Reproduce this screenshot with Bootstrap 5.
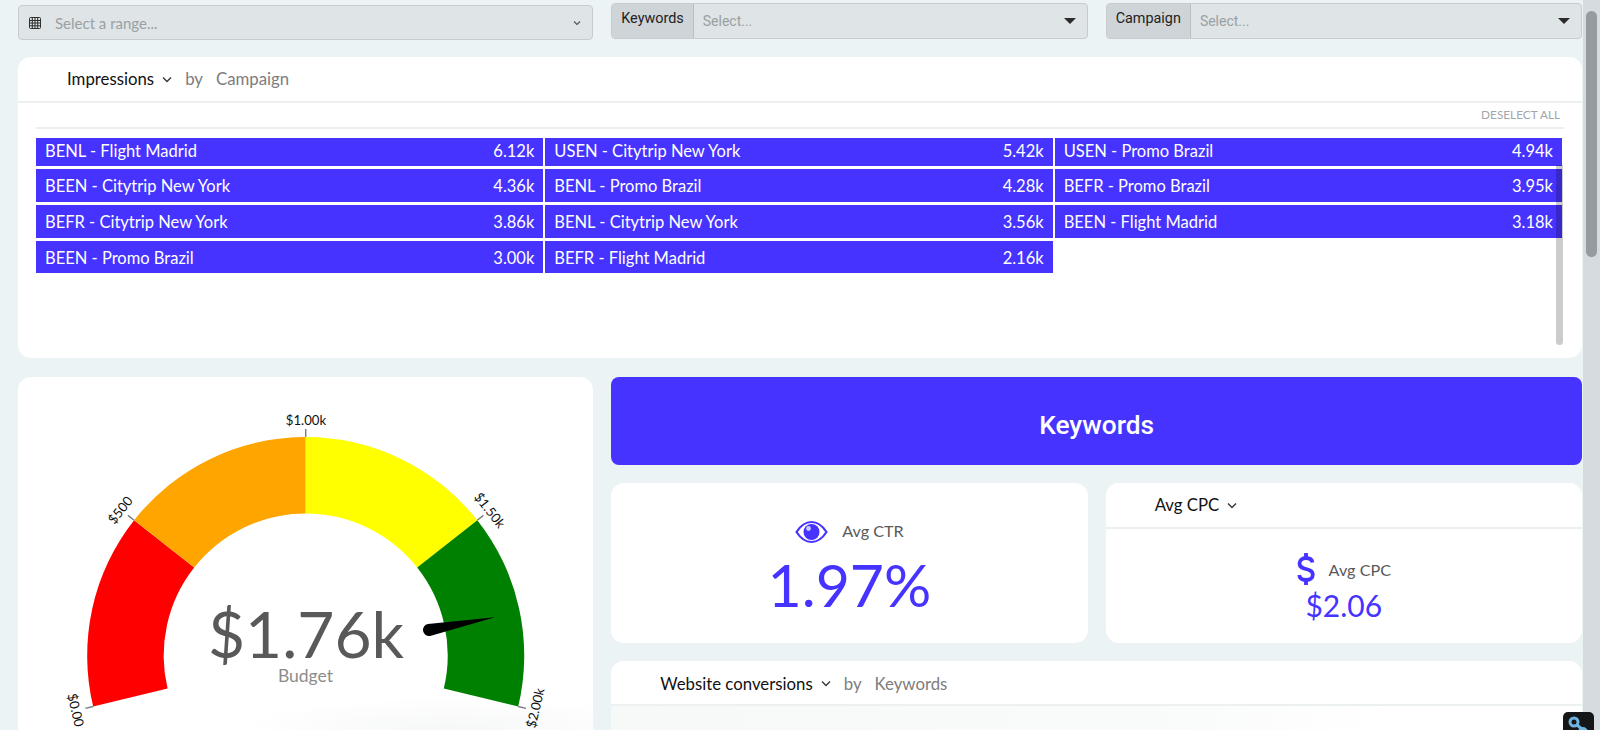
<!doctype html>
<html lang="en">
<head>
<meta charset="utf-8">
<title>Dashboard</title>
<link rel="stylesheet" href="https://cdn.jsdelivr.net/npm/bootstrap@5.3.0/dist/css/bootstrap.min.css">
<style>
:root{--brand:#4633ff;--pagebg:#ecf3f5;--field:#dfe4e6;--fieldline:#c6cccf}
html,body{height:730px;overflow:hidden}
body{background:var(--pagebg);font-family:"Lato","Liberation Sans",sans-serif;color:#111}
.page-area{flex:1 1 auto;min-width:0;height:730px;overflow:hidden;padding:3px 1px 0 18px}
.page-rail{flex:0 0 17px;width:17px;height:730px;background:#d5dbde;padding:11px 3px 0}
.page-thumb{height:246px;border-radius:6px;background:#959b9e}
.dash-row{--bs-gutter-x:18px;--bs-gutter-y:0}
.col-narrow{flex:0 0 37.5%;width:37.5%}
.col-broad{flex:0 0 62.5%;width:62.5%}
.filter-box{height:36px;background:var(--field);border:1px solid var(--fieldline);border-radius:4px;font:14.4px "Roboto",sans-serif}
.filter-range{margin-top:2px;height:35px;padding:0 11px 0 10px}
.ph{color:#9aa0a3}
.filter-tag{background:#ced4d7;color:#222;padding:0 9px;border-right:1px solid #b9bfc2;height:100%;border-radius:3px 0 0 3px;line-height:30px}
.filter-box .ph{margin-left:9px;font-size:14px}
.filter-box.filter-range .ph{margin-left:14px;font-family:"Lato",sans-serif;font-size:15px}
.caret-down{width:0;height:0;border-left:6px solid transparent;border-right:6px solid transparent;border-top:6px solid #2b2b2b;margin:0 11px 0 auto}
.filter-range svg.chev{margin-left:auto}
.panel{border:0;border-radius:13px;background:#fff;overflow:hidden}
.panel-head{display:flex;align-items:center;border-bottom:2px solid #edf0f1;height:46px;padding-left:49px;font-size:16.8px;background:#fff}
.panel-head .metric{color:#111}
.panel-head .by{color:#7d7d7d;margin-left:13px}
.panel-head .dim{color:#7d7d7d;margin-left:13px}
.panel-head svg{margin-left:8px}
.stack{display:flex;flex-direction:column;gap:18px}
.impressions{margin-top:17px;height:301px;position:relative}
.desel{height:26px;margin:0 18px;border-bottom:2px solid #eceeef;text-align:right;font-size:11.8px;color:#a2a6a8;line-height:24px;padding-right:4px}
.tiles{display:grid;grid-template-columns:repeat(3,1fr);grid-template-rows:28px 33px 33px 32px;gap:3px 2px;margin:9px 20px 0 18px;font-size:16.5px;color:#fff}
.tile{background:var(--brand);display:flex;justify-content:space-between;align-items:center;padding:2px 9px 0 9px}
.tile-first{padding:0 9px 1px 9px}
.tile-scroll{position:absolute;right:19px;top:108px;width:7px;height:180px;background:rgba(0,0,0,.2);border-radius:0 0 4px 4px}
.lower{margin-top:19px}
.gauge-panel{height:400px;position:relative}
.gauge-fade{position:absolute;left:220px;right:0;top:320px;height:33px;background:radial-gradient(ellipse 60% 100% at 60% 100%,#f6f7f7,rgba(255,255,255,0))}
.gauge-svg{display:block}
.gauge-svg text{font-family:"Lato",sans-serif}
.banner{height:88px;padding-top:8px;background:var(--brand);color:#fff;border-radius:8px;font:500 26.3px "Roboto",sans-serif}
.kpi{height:160px;border-radius:13px}
.kpi-label{font-size:16.2px;color:#5a5a5a}
.kpi-big{font-size:59px;line-height:1;color:var(--brand);margin-top:10px}
.kpi-mid{font-size:30px;line-height:1;color:var(--brand);margin-top:4px}
.kpi-top{padding-top:36px;gap:14px}
.kpi-top .kpi-label{margin-bottom:2px}
.cpc-head{padding-left:49px}
.cpc-body{padding-top:23px}
.cpc-row{gap:14px}
.cpc-row .kpi-label{padding-top:2px}
.conv{height:100px}
.conv .panel-head{padding-top:3px;height:48px}
.conv-body{height:60px;background:linear-gradient(90deg,#f7f8f8 0,#f9fafa 55%,#fff 80%)}
.corner-chip{position:absolute;left:1563px;top:712px;width:31px;height:30px;background:#141618;border-radius:5px;overflow:hidden}
</style>
</head>
<body class="d-flex position-relative">
<main class="page-area">
  <div class="row dash-row">
    <div class="col-narrow">
      <div class="filter-box filter-range d-flex align-items-center">
        <svg width="12" height="13" viewBox="0 0 12 13" fill="none" stroke="#2e2e2e" stroke-width="1"><rect x=".5" y="1.5" width="11" height="11" rx="1"/><path d="M.5 4.5h11M.5 7h11M.5 9.8h11M3.3 1v12M6 1v12M8.7 1v12"/></svg>
        <span class="ph">Select a range...</span>
        <svg class="chev" width="8" height="6" viewBox="0 0 8 6" fill="none" stroke="#555" stroke-width="1.2"><path d="M1 1.5l3 3 3-3"/></svg>
      </div>
    </div>
    <div class="col-broad">
      <div class="row dash-row">
        <div class="col-6">
          <div class="filter-box d-flex align-items-center">
            <span class="filter-tag">Keywords</span><span class="ph">Select...</span><span class="caret-down"></span>
          </div>
        </div>
        <div class="col-6">
          <div class="filter-box d-flex align-items-center">
            <span class="filter-tag">Campaign</span><span class="ph">Select...</span><span class="caret-down"></span>
          </div>
        </div>
      </div>
    </div>
  </div>

  <section class="card panel impressions">
    <div class="panel-head">
      <span class="metric">Impressions</span>
      <svg width="10" height="7" viewBox="0 0 10 7" fill="none" stroke="#333" stroke-width="1.3"><path d="M1 1.5l4 4 4-4"/></svg>
      <span class="by">by</span><span class="dim">Campaign</span>
    </div>
    <div class="desel">DESELECT ALL</div>
    <div class="tiles">
      <div class="tile tile-first"><span>BENL - Flight Madrid</span><span>6.12k</span></div>
      <div class="tile tile-first"><span>USEN - Citytrip New York</span><span>5.42k</span></div>
      <div class="tile tile-first"><span>USEN - Promo Brazil</span><span>4.94k</span></div>
      <div class="tile"><span>BEEN - Citytrip New York</span><span>4.36k</span></div>
      <div class="tile"><span>BENL - Promo Brazil</span><span>4.28k</span></div>
      <div class="tile"><span>BEFR - Promo Brazil</span><span>3.95k</span></div>
      <div class="tile"><span>BEFR - Citytrip New York</span><span>3.86k</span></div>
      <div class="tile"><span>BENL - Citytrip New York</span><span>3.56k</span></div>
      <div class="tile"><span>BEEN - Flight Madrid</span><span>3.18k</span></div>
      <div class="tile"><span>BEEN - Promo Brazil</span><span>3.00k</span></div>
      <div class="tile"><span>BEFR - Flight Madrid</span><span>2.16k</span></div>
    </div>
    <div class="tile-scroll"></div>
  </section>

  <div class="row dash-row lower">
    <div class="col-narrow">
      <section class="card panel gauge-panel">
        <div class="gauge-fade"></div>
        <svg class="gauge-svg position-relative" width="575" height="353" viewBox="0 0 575 353">
          <path fill="#ff0000" d="M75.2 329.5A218.5 218.5 0 0 1 116.1 143.2L176.2 190.6A142 142 0 0 0 149.6 311.6Z"/>
          <path fill="#ffa500" d="M116.1 143.2A218.5 218.5 0 0 1 287.7 60V136.5A142 142 0 0 0 176.2 190.6Z"/>
          <path fill="#ffff00" d="M287.7 60A218.5 218.5 0 0 1 459.3 143.2L399.2 190.6A142 142 0 0 0 287.7 136.5Z"/>
          <path fill="#008000" d="M459.3 143.2A218.5 218.5 0 0 1 500.2 329.5L425.8 311.6A142 142 0 0 0 399.2 190.6Z"/>
          <g stroke="#7c7c7c" stroke-width="1.4">
            <path d="M75.2 329.5L67.4 331.4M116.1 143.2L110 138.4M287.7 60V52M459.3 143.2L465.4 138.4M500.2 329.5L508 331.4"/>
          </g>
          <g font-size="13.2" fill="#111" text-anchor="middle" dominant-baseline="central">
            <text transform="translate(58 333) rotate(76.5)">$0.00</text>
            <text transform="translate(102 133) rotate(-51.75)">$500</text>
            <text transform="translate(288 43)">$1.00k</text>
            <text transform="translate(472 133) rotate(51.75)">$1.50k</text>
            <text transform="translate(517 331) rotate(-76.5)">$2.00k</text>
          </g>
          <path fill="#000" d="M477 240.3L412.1 258.9A6 6 0 0 1 409.9 247.1Z"/>
          <text x="288" y="281" font-size="64" fill="#595959" text-anchor="middle">$1.76k</text>
          <text x="287.5" y="305" font-size="17.5" fill="#8c8c8c" text-anchor="middle">Budget</text>
        </svg>
      </section>
    </div>
    <div class="col-broad">
      <div class="stack">
        <div class="banner d-flex align-items-center justify-content-center">Keywords</div>
        <div class="row dash-row">
          <div class="col-6">
            <div class="card panel kpi text-center">
              <div class="d-flex align-items-center justify-content-center kpi-top">
                <svg width="33" height="24" viewBox="0 0 33 24"><path d="M1.5 12C6 5 11 2 16.5 2S27 5 31.5 12C27 19 22 22 16.5 22S6 19 1.5 12Z" fill="none" stroke="#4633ff" stroke-width="2.2"/><circle cx="16.5" cy="12" r="8" fill="#4633ff"/><circle cx="13.5" cy="8.5" r="2.4" fill="#fff" opacity=".75"/></svg>
                <span class="kpi-label">Avg CTR</span>
              </div>
              <div class="kpi-big">1.97%</div>
            </div>
          </div>
          <div class="col-6">
            <div class="card panel kpi text-center">
              <div class="panel-head cpc-head">
                <span class="metric">Avg CPC</span>
                <svg width="10" height="7" viewBox="0 0 10 7" fill="none" stroke="#333" stroke-width="1.3"><path d="M1 1.5l4 4 4-4"/></svg>
              </div>
              <div class="cpc-body">
                <div class="d-flex align-items-center justify-content-center cpc-row">
                  <svg width="18" height="34" viewBox="0 0 18 34" fill="none" stroke="#4633ff" stroke-width="3.8"><path d="M15.5 10.5C15 7.5 12.5 6 9 6S2.5 8 2.5 11.5C2.5 19 15.8 15 15.8 22.8C15.8 26.3 12.8 28 9 28S2.6 26.3 2.2 23"/><path d="M9 1v5M9 28v5"/></svg>
                  <span class="kpi-label">Avg CPC</span>
                </div>
                <div class="kpi-mid">$2.06</div>
              </div>
            </div>
          </div>
        </div>
        <section class="card panel conv">
          <div class="panel-head">
            <span class="metric">Website conversions</span>
            <svg width="10" height="7" viewBox="0 0 10 7" fill="none" stroke="#333" stroke-width="1.3"><path d="M1 1.5l4 4 4-4"/></svg>
            <span class="by">by</span><span class="dim">Keywords</span>
          </div>
          <div class="conv-body"></div>
        </section>
      </div>
    </div>
  </div>
</main>
<aside class="page-rail"><div class="page-thumb"></div></aside>
<div class="corner-chip">
  <svg width="31" height="30" viewBox="0 0 31 30" fill="none" stroke="#6fb2e0" stroke-width="3"><circle cx="11" cy="10" r="4"/><path d="M14 13l6 5"/><circle cx="20" cy="20" r="3.4"/></svg>
</div>
</body>
</html>
